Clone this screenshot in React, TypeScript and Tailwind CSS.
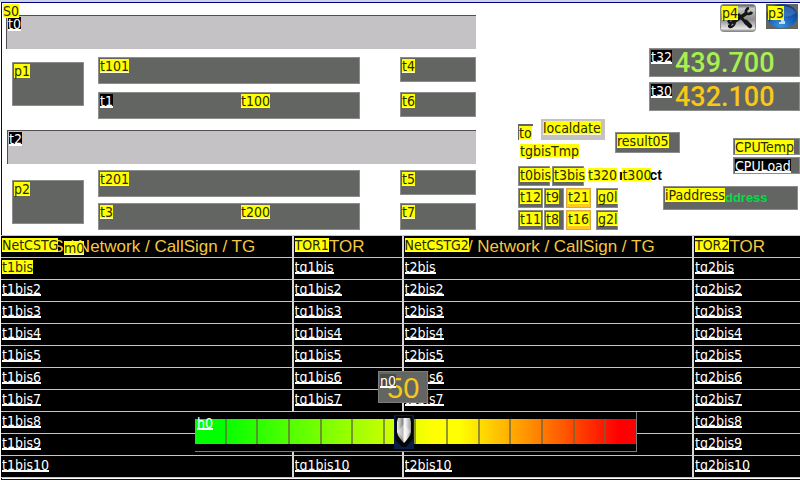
import { useState, type ReactNode } from "react";

type TagProps = { children: ReactNode; tone?: "yellow" | "black" | "clear" | "gray" };

function Tag({ children, tone = "yellow" }: TagProps) {
  const tones = {
    yellow: "bg-[#ffff00] text-[#2a2a00] border-b border-[#ffffc0]",
    black: "bg-black text-white border-b-2 border-white overflow-hidden",
    clear: "text-white border-b-2 border-white overflow-hidden",
    gray: "bg-[#484a48] text-white border-b-2 border-white overflow-hidden",
  };
  return (
    <span
      className={`block h-[14px] w-fit shrink-0 whitespace-nowrap text-[14px] leading-[14px] ${tones[tone]}`}
    >
      {children}
    </span>
  );
}

function Box({ className, children }: { className: string; children?: ReactNode }) {
  return (
    <div className={`flex shrink-0 items-start border border-[#8c8e8c] bg-[#636563] pl-px pt-px ${className}`}>
      {children}
    </div>
  );
}

function Station({
  picture,
  pictureTop,
  bars,
  extras,
  className,
}: {
  picture: string;
  pictureTop: string;
  bars: ReactNode;
  extras: ReactNode;
  className: string;
}) {
  return (
    <div className={`flex items-start ${className}`}>
      <Box className={`h-[44px] w-[72px] ${pictureTop}`}>
        <Tag>{picture}</Tag>
      </Box>
      <div className="ml-[14px]">{bars}</div>
      <div className="ml-[40px]">{extras}</div>
    </div>
  );
}

function ToolsIcon() {
  return (
    <svg width="36" height="28" viewBox="0 0 36 28" aria-hidden="true">
      <defs>
        <linearGradient id="steel" x1="0" y1="0" x2="0" y2="1">
          <stop offset="0" stopColor="#555" />
          <stop offset="0.15" stopColor="#c8c8c8" />
          <stop offset="0.55" stopColor="#8c8c8c" />
          <stop offset="0.9" stopColor="#e8e8e8" />
          <stop offset="1" stopColor="#777" />
        </linearGradient>
      </defs>
      <rect x="0.5" y="0.5" width="35" height="27" rx="3" fill="url(#steel)" stroke="#8a8a8a" />
      <g stroke="#161616" fill="none">
        <path d="M12 19 L27 9" strokeWidth="3.5" />
        <path d="M18 10 L27 20" strokeWidth="3" />
        <path d="M26 18 L30 22" strokeWidth="4.5" strokeLinecap="round" />
        <path d="M8 18 L11 19 L10 22 L8 22" strokeWidth="2.4" />
        <path d="M8 18 A3.5 3.5 0 1 1 13 22 Q11 24 9 23" strokeWidth="2" />
        <path d="M29 4 A4 4 0 0 0 26 9 A4 4 0 0 0 32 8" strokeWidth="2.8" />
      </g>
    </svg>
  );
}

function InfoIcon() {
  return (
    <svg width="32" height="25" viewBox="0 0 32 25" aria-hidden="true">
      <defs>
        <radialGradient id="globe" cx="0.45" cy="0.9" r="0.9">
          <stop offset="0" stopColor="#3c94e4" />
          <stop offset="0.5" stopColor="#185cb4" />
          <stop offset="1" stopColor="#0c3a86" />
        </radialGradient>
      </defs>
      <rect width="32" height="25" fill="#636563" />
      <ellipse cx="16" cy="12" rx="15.5" ry="12" fill="url(#globe)" />
      <path d="M13 10 H18 V17 H19 V20 H13 V18 H15 V12 H13 Z" fill="#c4e0f8" />
      <path d="M2 9 A15 11 0 0 1 30 9 Q23 14 16 12 Q8 11 2 9 Z" fill="#7ab0e4" opacity="0.3" />
    </svg>
  );
}

function Frequency({ id, value, color }: { id: string; value: string; color: string }) {
  return (
    <Box className="h-[29px] w-[151px]">
      <Tag tone="black">{id}</Tag>
      <span className={`ml-[3px] font-['Roboto',sans-serif] text-[27px] font-medium leading-[27px] ${color}`}>
        {value}
      </span>
    </Box>
  );
}

const rows = ["", "2", "3", "4", "5", "6", "7", "8", "9", "10"];
const cell = "h-[22px] border-t border-[#c6c6c6] p-0 pl-px pt-[2px] text-left align-top font-normal";
const split = "border-l-2 border-l-[#d8d8d8]";
const heading =
  "font-['Liberation_Sans',Arial,sans-serif] text-[17px] leading-[18px] text-[#f4c840] whitespace-nowrap";

function HeaderCell({ tag, text, gap, className }: { tag: string; text: string; gap: string; className: string }) {
  return (
    <th scope="col" className={`${cell} ${className}`}>
      <div className="flex h-[18px] items-start">
        <span className="relative">
          <Tag>{tag}</Tag>
        </span>
        <span className={`${heading} ${gap}`}>{text}</span>
      </div>
    </th>
  );
}

function NetworkTable() {
  return (
    <table className="w-full table-fixed border-separate border-spacing-0 border-b border-[#c6c6c6] bg-black">
      <colgroup>
        <col />
        <col className="w-[110px]" />
        <col />
        <col className="w-[108px]" />
      </colgroup>
      <thead>
        <tr>
          <HeaderCell tag="NetCSTG" text="S / Network / CallSign / TG" gap="-ml-[6px]" className="" />
          <HeaderCell tag="TOR1" text="TOR" gap="" className={split} />
          <HeaderCell tag="NetCSTG2" text="/ Network / CallSign / TG" gap="-ml-px" className={split} />
          <HeaderCell tag="TOR2" text="TOR" gap="" className={split} />
        </tr>
      </thead>
      <tbody>
        {rows.map((n) => (
          <tr key={n}>
            <td className={cell}>
              <Tag tone={n ? "clear" : "yellow"}>t1bis{n}</Tag>
            </td>
            <td className={`${cell} ${split}`}>
              <Tag tone="clear">tg1bis{n}</Tag>
            </td>
            <td className={`${cell} ${split}`}>
              <Tag tone="clear">t2bis{n}</Tag>
            </td>
            <td className={`${cell} ${split}`}>
              <Tag tone="clear">tg2bis{n}</Tag>
            </td>
          </tr>
        ))}
      </tbody>
    </table>
  );
}

function VolumeSlider({ value, onChange }: { value: number; onChange: (v: number) => void }) {
  return (
    <div className="absolute left-[194px] top-[177px] h-[40px] w-[442px] border-b border-r border-[#7c7c7c] bg-black">
      <div className="mt-[7px] flex h-[25px] bg-[linear-gradient(to_right,#00ff00_6%,#ffff00_54%,#ffff00_60%,#ff0000_96%)]">
        {Array.from({ length: 14 }, (_, i) => (
          <div key={i} className="flex-1 border-r-2 border-[#686840]/70 last:border-r-0" />
        ))}
      </div>
      <label htmlFor="h0" className="absolute left-[2px] top-[4px]">
        <Tag tone="clear">h0</Tag>
      </label>
      <div className="absolute inset-y-0 left-[6px] right-[30px]">
        <svg
          width="20"
          height="34"
          viewBox="0 0 20 34"
          className="absolute top-[3px] -translate-x-1/2"
          style={{ left: `${value}%` }}
          aria-hidden="true"
        >
          <defs>
            <linearGradient id="chrome" x1="0" y1="0" x2="1" y2="0">
              <stop offset="0" stopColor="#eee" />
              <stop offset="0.4" stopColor="#8a8a8a" />
              <stop offset="0.55" stopColor="#fff" />
              <stop offset="1" stopColor="#999" />
            </linearGradient>
          </defs>
          <rect width="20" height="34" fill="#081c48" />
          <path d="M2 1 H18 L19 5 V24 L12 32 H8 L1 24 V5 Z" fill="#050505" />
          <path d="M4 3 H16 L17 7 V17 Q16 22 10 28 Q4 22 3 17 V7 Z" fill="url(#chrome)" />
          <path d="M4 16 L10 9 L16 16 L10 26 Z" fill="#fff" opacity="0.4" />
        </svg>
      </div>
      <input
        id="h0"
        type="range"
        min={0}
        max={100}
        value={value}
        onChange={(e) => onChange(Number(e.target.value))}
        className="absolute inset-0 h-full w-full cursor-pointer opacity-0"
      />
    </div>
  );
}

export default function App() {
  const [volume, setVolume] = useState(50);
  return (
    <main className="min-h-screen border-t-2 border-[#ccd4e6] bg-white font-['DejaVu_Sans_Condensed','DejaVu_Sans',sans-serif]">
      <div className="ml-px border-y border-l border-[#000080] pb-px">
        <div className="flex items-start justify-between">
          <section className="w-[474px] shrink-0">
            <div className="relative z-10 ml-px mt-px h-[11px]">
              <Tag>S0</Tag>
            </div>
            <div className="ml-[4px] h-[34px] border-l border-t border-[#505050] bg-[#c5c2c5] pl-px pt-px">
              <Tag tone="black">t0</Tag>
            </div>
            <Station
              className="ml-[10px] mt-[8px]"
              picture="p1"
              pictureTop="mt-[5px]"
              bars={
                <>
                  <Box className="h-[27px] w-[262px]">
                    <Tag>t101</Tag>
                  </Box>
                  <Box className="mt-[8px] h-[27px] w-[262px]">
                    <Tag tone="black">t1</Tag>
                    <span className="ml-[128px]">
                      <Tag>t100</Tag>
                    </span>
                  </Box>
                </>
              }
              extras={
                <>
                  <Box className="h-[25px] w-[76px]">
                    <Tag>t4</Tag>
                  </Box>
                  <Box className="mt-[10px] h-[25px] w-[76px]">
                    <Tag>t6</Tag>
                  </Box>
                </>
              }
            />
            <div className="ml-[5px] mt-[11px] h-[34px] border-l border-t border-[#505050] bg-[#c5c2c5] pl-px pt-px">
              <Tag tone="black">t2</Tag>
            </div>
            <Station
              className="ml-[10px] mt-[6px]"
              picture="p2"
              pictureTop="mt-[10px]"
              bars={
                <>
                  <Box className="h-[27px] w-[262px]">
                    <Tag>t201</Tag>
                  </Box>
                  <Box className="mt-[6px] h-[27px] w-[262px]">
                    <Tag>t3</Tag>
                    <span className="ml-[128px]">
                      <Tag>t200</Tag>
                    </span>
                  </Box>
                </>
              }
              extras={
                <>
                  <Box className="h-[25px] w-[76px]">
                    <Tag>t5</Tag>
                  </Box>
                  <Box className="mt-[8px] h-[27px] w-[76px]">
                    <Tag>t7</Tag>
                  </Box>
                </>
              }
            />
          </section>

          <section className="w-[282px] shrink-0">
            <div className="mt-px flex items-start justify-end gap-[10px] pr-[2px]">
              <button type="button" className="relative block h-[28px] w-[36px]">
                <ToolsIcon />
                <span className="absolute left-[2px] top-[2px]">
                  <Tag>p4</Tag>
                </span>
              </button>
              <button type="button" className="relative block h-[25px] w-[32px]">
                <InfoIcon />
                <span className="absolute left-[2px] top-[2px]">
                  <Tag>p3</Tag>
                </span>
              </button>
            </div>
            <div className="mt-[16px] flex flex-col items-end gap-[5px]">
              <Frequency id="t32" value="439.700" color="text-[#a8f050]" />
              <Frequency id="t30" value="432.100" color="text-[#f8c818]" />
            </div>

            <div className="mt-[8px] flex h-[47px] items-start">
              <div>
                <div className="flex items-start gap-[8px]">
                  <div className="mt-[5px] h-[16px] w-[15px] border-l border-t-2 border-[#636563]">
                    <Tag>to</Tag>
                  </div>
                  <div className="h-[21px] w-[64px] bg-[#c5c2c5] pl-[2px] pt-[2px]">
                    <Tag>localdate</Tag>
                  </div>
                </div>
                <div className="ml-[2px] mt-[4px]">
                  <Tag>tgbisTmp</Tag>
                </div>
              </div>
              <Box className="ml-[10px] mt-[13px] h-[21px] w-[65px]">
                <Tag>result05</Tag>
              </Box>
              <div className="ml-auto mt-[19px] flex flex-col gap-[2px]">
                <Box className="h-[17px] w-[67px]">
                  <Tag>CPUTemp</Tag>
                </Box>
                <Box className="h-[17px] w-[67px]">
                  <Tag tone="black">CPULoad</Tag>
                </Box>
              </div>
            </div>

            <div className="flex items-start justify-between">
              <div>
                <div className="flex h-[20px] items-start">
                  <Box className="h-[20px] w-[32px]">
                    <Tag>t0bis</Tag>
                  </Box>
                  <Box className="ml-[2px] h-[20px] w-[32px]">
                    <Tag>t3bis</Tag>
                  </Box>
                  <div className="ml-[4px] flex pt-[2px]">
                    <Tag>t320</Tag>
                    <span className="ml-[2px] font-['Liberation_Sans',sans-serif] text-[14px] font-bold leading-[14px]">
                      r
                    </span>
                    <span className="relative -ml-[2px]">
                      <Tag>t300</Tag>
                    </span>
                    <span className="-ml-[2px] font-['Liberation_Sans',sans-serif] text-[14px] font-bold leading-[14px]">
                      ct
                    </span>
                  </div>
                </div>
                {[
                  ["t12", "t9", "t21", "g0l"],
                  ["t11", "t8", "t16", "g2l"],
                ].map(([a, b, c, d]) => (
                  <div key={a} className="mt-[2px] flex h-[20px] items-start">
                    <Box className="h-[20px] w-[25px]">
                      <Tag>{a}</Tag>
                    </Box>
                    <Box className="ml-px h-[20px] w-[20px]">
                      <Tag>{b}</Tag>
                    </Box>
                    <div className="ml-[2px] h-[20px] w-[25px] border border-[#e0a840] bg-[#ffc820] pl-px pt-px">
                      <Tag>{c}</Tag>
                    </div>
                    <Box className="ml-[5px] h-[20px] w-[22px]">
                      <Tag>{d}</Tag>
                    </Box>
                  </div>
                ))}
              </div>
              <Box className="mr-[2px] mt-[20px] h-[24px] w-[135px]">
                <Tag>iPaddress</Tag>
                <span className="font-['Liberation_Sans',sans-serif] text-[13px] font-bold leading-[20px] text-[#08d848]">
                  ddress
                </span>
              </Box>
            </div>
          </section>
        </div>

        <section className="relative -ml-px mt-[5px]">
          <NetworkTable />
          <div className="absolute left-[63px] top-[6px]">
            <Tag>m0</Tag>
          </div>
          <output
            htmlFor="h0"
            className="absolute left-[377px] top-[136px] flex h-[32px] w-[50px] items-start border border-[#7c7e7c] bg-[#636563] pl-px pt-[2px]"
          >
            <span className="absolute left-[8px] top-px font-['Liberation_Sans',sans-serif] text-[29px] leading-[30px] text-[#f8c818]">
              {volume}
            </span>
            <span className="relative">
              <Tag tone="gray">n0</Tag>
            </span>
          </output>
          <VolumeSlider value={volume} onChange={setVolume} />
        </section>
      </div>
    </main>
  );
}
